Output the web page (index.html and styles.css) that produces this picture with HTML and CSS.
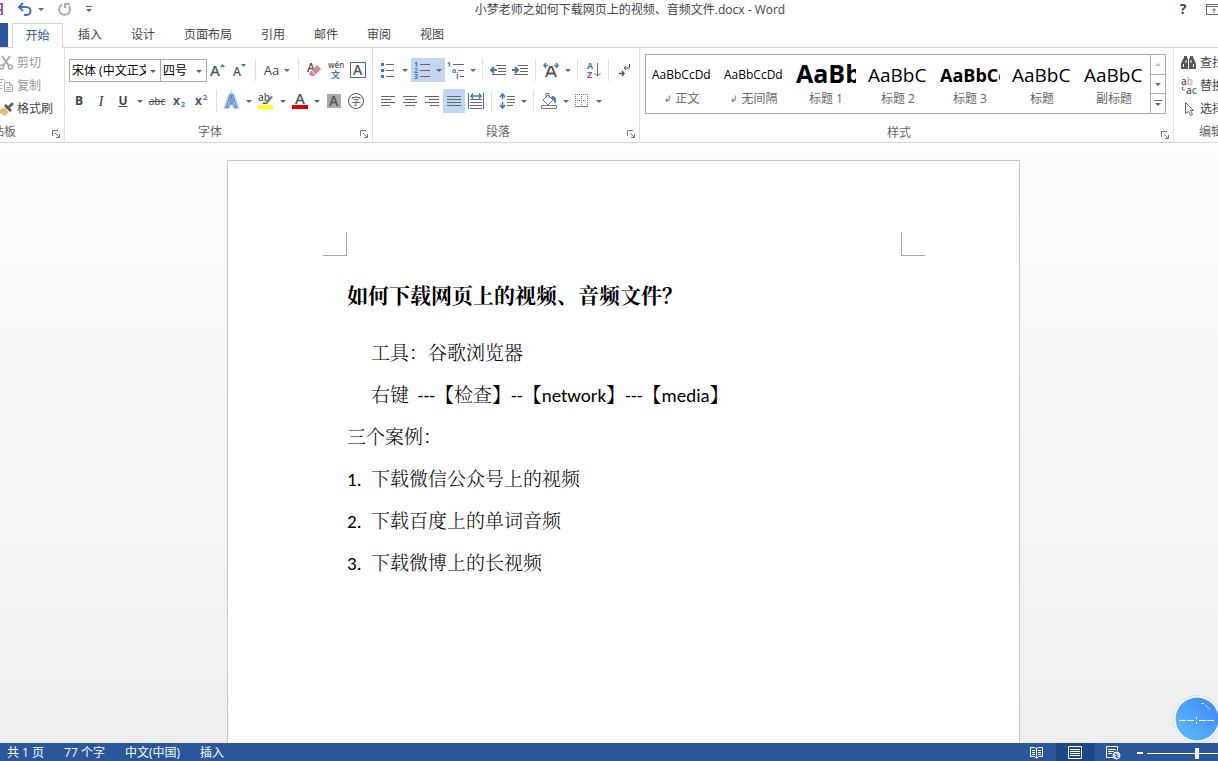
FILE: index.html
```html
<!DOCTYPE html>
<html lang="zh-CN">
<head>
<meta charset="utf-8">
<title>小梦老师之如何下载网页上的视频、音频文件.docx - Word</title>
<link rel="stylesheet" href="styles.css">
</head>
<body>
<header class="titlebar">
  <div class="quick">
    <button class="q save" aria-label="保存"><svg width="4" height="14"><path d="M0 1h3v12H0z" fill="#8e5ba6"/><path d="M0 3h1v4H0zM0 9h1v3H0z" fill="#fff"/></svg></button>
    <button class="q undo" aria-label="撤消"><svg width="16" height="15" fill="none" stroke="#3f76b8" stroke-width="2"><path d="M2 5h7c6 0 6 8 0 8H7"/><path d="M6 1L2 5l4 4"/></svg></button>
    <button class="q more" aria-label="撤消选项"><i class="caret"></i></button>
    <button class="q redo" aria-label="重复"><svg width="16" height="15" fill="none" stroke="#b0b0b0" stroke-width="2"><path d="M5 2.500A5.500 5.500 0 1 0 12 4"/><path d="M8 6V2h5"/></svg></button>
    <button class="q" aria-label="自定义快速访问工具栏"><svg width="8" height="8"><path d="M1 1h6v1H1z" fill="#666"/><path d="M1 4h6L4 7z" fill="#666"/></svg></button>
  </div>
  <h1 class="doc-name">小梦老师之如何下载网页上的视频、音频文件.docx - Word</h1>
  <div class="window-tools">
    <button class="q help" aria-label="帮助">?</button>
    <button class="q" aria-label="功能区显示选项"><svg width="16" height="11" fill="none" stroke="#666"><path d="M.5.500h15v10H.500zM.500 2.500h15M8 9V5M6 6.500l2-2 2 2"/></svg></button>
  </div>
</header>

<nav class="tabs" aria-label="功能区">
  <button class="file-tab" aria-label="文件"></button>
  <button class="tab active">开始</button>
  <button class="tab">插入</button>
  <button class="tab">设计</button>
  <button class="tab">页面布局</button>
  <button class="tab">引用</button>
  <button class="tab">邮件</button>
  <button class="tab">审阅</button>
  <button class="tab">视图</button>
</nav>

<section class="ribbon">
  <div class="group clipboard">
    <div class="stack">
      <button class="cmd off"><svg width="14" height="16" fill="none" stroke="#aaa" stroke-width="2"><path d="M2 1l7 10M10 1L3 11"/><circle cx="1.500" cy="12" r="2" stroke-width="1.500"/><circle cx="10.500" cy="12" r="2" stroke-width="1.500"/></svg>剪切</button>
      <button class="cmd off"><svg width="14" height="16" fill="none" stroke="#aaa"><path d="M0 1.500h4l2 2M0 4.500h2M0 7.500h2M0 10.500h2"/><path d="M4.500 4.500h5l3 3v6h-8zM9.500 4.500v3h3M6 9.500h5M6 11.500h5"/></svg>复制</button>
      <button class="cmd"><svg width="14" height="16"><path d="M0 9l4-3 5 5-4 4-5-3z" fill="#e5bc79"/><path d="M4 5l2-2 6 6-2 2z" fill="#555"/><path d="M8 5l4-4 2 2-4 4z" fill="#666"/></svg>格式刷</button>
    </div>
    <div class="caption"><span>剪贴板</span><button class="launch" aria-label="剪贴板选项"><svg width="8" height="8" fill="none" stroke="#777"><path d="M.500 6V.500H6M3 3l4 4M7.500 4v3.500H4"/></svg></button></div>
  </div>

  <div class="group font">
    <div class="row">
      <label class="pick family"><select aria-label="字体"><option>宋体 (中文正文)</option></select></label>
      <label class="pick size"><select aria-label="字号"><option>四号</option></select></label>
      <button class="b" aria-label="增大字号"><svg width="16" height="16"><text x="0" y="14" font-size="15" class="ico">A</text><path d="M10 5l2.500-3L15 5z" fill="#3f76b8"/></svg></button>
      <button class="b" aria-label="减小字号"><svg width="16" height="16"><text x="1" y="14" font-size="12" class="ico">A</text><path d="M9 2h5l-2.500 3z" fill="#3f76b8"/></svg></button>
      <i class="sep"></i>
      <button class="b wide" aria-label="更改大小写"><span class="case">Aa</span><i class="caret"></i></button>
      <i class="sep"></i>
      <button class="b" aria-label="清除格式"><svg width="16" height="16"><text x="1" y="10" font-size="12" class="ico">A</text><path d="M4 10l7-7 4 4-7 7H5l-2-2z" fill="#e2838f"/><path d="M5 8l5 5" stroke="#fff"/></svg></button>
      <button class="b" aria-label="拼音指南"><svg width="18" height="18"><text x="1" y="7" font-size="8" class="ico">wén</text><text x="4" y="17" font-size="9" class="blue cjk">文</text></svg></button>
      <button class="b" aria-label="字符边框"><svg width="16" height="16"><path d="M.500.500h15v15H.500z" fill="none" stroke="#3f6c9b"/><text x="3" y="13" font-size="14" class="ico">A</text></svg></button>
    </div>
    <div class="row">
      <button class="b strong" aria-label="加粗">B</button>
      <button class="b slant" aria-label="倾斜">I</button>
      <button class="b under" aria-label="下划线">U</button><button class="drop" aria-label="下划线选项"><i class="caret"></i></button>
      <button class="b strike" aria-label="删除线">abc</button>
      <button class="b" aria-label="下标"><svg width="14" height="16"><text x="1" y="12" font-size="12" class="ico bold">x</text><text x="9" y="14" font-size="7" class="blue">2</text></svg></button>
      <button class="b" aria-label="上标"><svg width="14" height="16"><text x="1" y="12" font-size="12" class="ico bold">x</text><text x="9" y="7" font-size="7" class="blue">2</text></svg></button>
      <i class="sep"></i>
      <button class="b" aria-label="文本效果"><svg width="16" height="16"><text x="2" y="14" font-size="16" class="halo">A</text><text x="2" y="14" font-size="16" class="glow">A</text></svg></button><button class="drop" aria-label="文本效果选项"><i class="caret"></i></button>
      <button class="b" aria-label="突出显示"><svg width="18" height="18"><text x="1" y="9" font-size="10" class="ico">ab</text><path d="M7 12l7-8 2 1-6 7z" fill="#777"/><path d="M5 12l2-2 2 2z" fill="#555"/><path d="M1 13h15v4H1z" fill="#ff0"/></svg></button><button class="drop" aria-label="突出显示颜色"><i class="caret"></i></button>
      <button class="b" aria-label="字体颜色"><svg width="18" height="18"><text x="4" y="12" font-size="15" class="ico">A</text><path d="M1 13h16v4H1z" fill="#e00000"/></svg></button><button class="drop" aria-label="字体颜色选项"><i class="caret"></i></button>
      <button class="b" aria-label="字符底纹"><svg width="14" height="14"><path d="M0 0h14v14H0z" fill="#aaa"/><text x="2" y="12" font-size="14" class="ico">A</text></svg></button>
      <button class="b" aria-label="带圈字符"><svg width="16" height="16"><circle cx="8" cy="8" r="7.500" fill="none" stroke="#555"/><text x="3" y="12" font-size="10" class="ico cjk">字</text></svg></button>
    </div>
    <div class="caption"><span>字体</span><button class="launch" aria-label="字体选项"><svg width="8" height="8" fill="none" stroke="#777"><path d="M.500 6V.500H6M3 3l4 4M7.500 4v3.500H4"/></svg></button></div>
  </div>

  <div class="group para">
    <div class="row">
      <button class="b" aria-label="项目符号"><svg width="16" height="16"><path d="M1 1h3v3H1zM1 7h3v3H1zM1 13h3v3H1z" fill="#3f76b8"/><path d="M6 2.500h8M6 8.500h8M6 14.500h8" stroke="#666"/></svg></button><button class="drop" aria-label="项目符号库"><i class="caret"></i></button>
      <button class="b on" aria-label="编号"><svg width="18" height="18"><text x="1" y="6" font-size="7" class="blue">1</text><text x="1" y="12" font-size="7" class="blue">2</text><text x="1" y="18" font-size="7" class="blue">3</text><path d="M7 3.500h10M7 9.500h10M7 15.500h10" stroke="#666"/></svg></button><button class="drop on" aria-label="编号库"><i class="caret"></i></button>
      <button class="b" aria-label="多级列表"><svg width="18" height="18"><text x="0" y="6" font-size="7" class="blue">1</text><text x="5" y="12" font-size="7" class="blue">a</text><text x="9" y="18" font-size="8" class="blue">i</text><path d="M6 3.500h11M11 9.500h6M13 15.500h4" stroke="#666"/></svg></button><button class="drop near" aria-label="多级列表库"><i class="caret"></i></button>
      <i class="sep"></i>
      <button class="b" aria-label="减少缩进量"><svg width="16" height="16" fill="none" stroke="#666"><path d="M6 3.500h10M8 6.500h8M8 9.500h8M2 12.500h14"/><path d="M1 8h6M4 5L1 8l3 3" stroke="#3f76b8" stroke-width="2"/></svg></button>
      <button class="b" aria-label="增加缩进量"><svg width="16" height="16" fill="none" stroke="#666"><path d="M6 3.500h10M8 6.500h8M8 9.500h8M2 12.500h14"/><path d="M0 8h6M3 5l3 3-3 3" stroke="#3f76b8" stroke-width="2"/></svg></button>
      <i class="sep"></i>
      <button class="b" aria-label="中文版式"><svg width="16" height="16"><path d="M3 15L7 5h2l4 10M5 11.500h6" fill="none" stroke="#555" stroke-width="2"/><path d="M3 1L1 3.500 3 6M1 3.500h4M13 1l2 2.500L13 6M15 3.500h-4" fill="none" stroke="#3f76b8" stroke-width="1.500"/></svg></button><button class="drop near" aria-label="中文版式选项"><i class="caret"></i></button>
      <i class="sep"></i>
      <button class="b" aria-label="排序"><svg width="16" height="18"><text x="2" y="8" font-size="9" class="blue">A</text><text x="2" y="17" font-size="9" class="violet">Z</text><path d="M12.500 2v13M9.500 12l3 3 3-3" fill="none" stroke="#666"/></svg></button>
      <i class="sep"></i>
      <button class="b" aria-label="显示编辑标记"><svg width="14" height="16" fill="none" stroke="#555"><path d="M12.500 2v4H7M9 4L7 6l2 2"/><path d="M2 11.500h5M5 9l2 2.500L5 14" stroke-width="1.500"/></svg></button>
    </div>
    <div class="row">
      <button class="b" aria-label="左对齐"><svg width="14" height="12" stroke="#666"><path d="M0 1.500h14M0 4.500h10M0 7.500h14M0 10.500h9"/></svg></button>
      <button class="b" aria-label="居中"><svg width="14" height="12" stroke="#666"><path d="M0 1.500h14M2 4.500h10M0 7.500h14M2 10.500h10"/></svg></button>
      <button class="b" aria-label="右对齐"><svg width="14" height="12" stroke="#666"><path d="M0 1.500h14M4 4.500h10M0 7.500h14M5 10.500h9"/></svg></button>
      <button class="b on" aria-label="两端对齐"><svg width="14" height="12" stroke="#666"><path d="M0 1.500h14M0 4.500h14M0 7.500h14M0 10.500h14"/></svg></button>
      <button class="b" aria-label="分散对齐"><svg width="16" height="16" fill="none" stroke="#666"><path d="M2 6.500h12M2 9.500h12M2 12.500h12M2 15.500h12"/><path d="M.500 0v16M15.500 0v16" stroke="#3f76b8"/><path d="M3 3h10M5 .500L3 3l2 2.500M11 .500L13 3l-2 2.500" stroke="#3f76b8" stroke-width="1.500"/></svg></button>
      <i class="sep"></i>
      <button class="b" aria-label="行距"><svg width="16" height="16" fill="none" stroke="#666"><path d="M8 3.500h8M8 6.500h8M8 9.500h8M8 12.500h6"/><path d="M3.500 1v5M1 4l2.500-3L6 4M3.500 9v6M1 12l2.500 3L6 12" stroke="#3f76b8" stroke-width="1.500"/></svg></button><button class="drop near" aria-label="行距选项"><i class="caret"></i></button>
      <i class="sep"></i>
      <button class="b" aria-label="底纹"><svg width="18" height="18" fill="none" stroke="#777"><path d="M3 8l5-5 5 5-5 5zM6 6V1.500h3V6"/><path d="M12 4c4 0 5 4 3 8-1-3-1-5-4-6z" fill="#3f76b8" stroke="none"/><path d="M1.500 13.500h15v3h-15z"/></svg></button><button class="drop near" aria-label="底纹颜色"><i class="caret"></i></button>
      <button class="b" aria-label="边框"><svg width="14" height="14" fill="none" stroke="#777"><path d="M0 .500h13M0 6.500h13M.500 0v13M6.500 0v13M12.500 0v13" stroke-dasharray="1 1"/><path d="M0 12.500h13"/></svg></button><button class="drop" aria-label="边框选项"><i class="caret"></i></button>
    </div>
    <div class="caption"><span>段落</span><button class="launch" aria-label="段落选项"><svg width="8" height="8" fill="none" stroke="#777"><path d="M.500 6V.500H6M3 3l4 4M7.500 4v3.500H4"/></svg></button></div>
  </div>

  <div class="group styles">
    <div class="gallery">
      <button class="style"><span class="sample small">AaBbCcDd</span><span class="style-name"><i class="mark">↲</i>正文</span></button>
      <button class="style"><span class="sample small">AaBbCcDd</span><span class="style-name"><i class="mark">↲</i>无间隔</span></button>
      <button class="style"><span class="sample huge">AaBb</span><span class="style-name">标题 1</span></button>
      <button class="style"><span class="sample">AaBbC</span><span class="style-name">标题 2</span></button>
      <button class="style"><span class="sample heavy">AaBbCc</span><span class="style-name">标题 3</span></button>
      <button class="style"><span class="sample">AaBbC</span><span class="style-name">标题</span></button>
      <button class="style"><span class="sample">AaBbC</span><span class="style-name">副标题</span></button>
      <div class="scroller">
        <button aria-label="上一行"><svg width="6" height="4"><path d="M0 4l3-3 3 3z" fill="#bbb"/></svg></button>
        <button aria-label="下一行"><i class="caret"></i></button>
        <button aria-label="其他样式"><svg width="8" height="7"><path d="M0 0h8v1H0zM1 3h6L4 6z" fill="#666"/></svg></button>
      </div>
    </div>
    <div class="caption"><span>样式</span><button class="launch" aria-label="样式选项"><svg width="8" height="8" fill="none" stroke="#777"><path d="M.500 6V.500H6M3 3l4 4M7.500 4v3.500H4"/></svg></button></div>
  </div>

  <div class="group editing">
    <div class="stack">
      <button class="cmd"><svg width="16" height="16" fill="#555"><path d="M3 1h3v2l1 1v10H0V9l2-5 1-1zM9 1h3v2l1 1 2 5v5H8V4l1-1z"/><path d="M2.500 9v3M5 5v3M10 5v3M12.500 9v3" stroke="#fff"/></svg>查找</button>
      <button class="cmd"><svg width="16" height="16"><text x="0" y="7" font-size="10" class="ico">a<tspan fill="#c9a9a0">b</tspan></text><text x="5" y="16" font-size="10" class="ico">a<tspan fill="#3f76b8">c</tspan></text><path d="M1.500 9v3H4" fill="none" stroke="#3f76b8"/></svg>替换</button>
      <button class="cmd"><svg width="16" height="16" fill="#fff" stroke="#666"><path d="M4.500 1.500v11l3-2 2 4 2-1-2-4h3z"/></svg>选择</button>
    </div>
    <div class="caption"><span>编辑</span></div>
  </div>
</section>

<main class="workspace">
  <article class="page">
    <div class="margins"><i class="corner left"></i><i class="corner right"></i></div>
    <div class="text">
      <h2>如何下载网页上的视频、音频文件？</h2>
      <p class="indent">工具：谷歌浏览器</p>
      <p class="indent">右键&nbsp; ---【检查】--【network】---【media】</p>
      <p>三个案例：</p>
      <ol>
        <li><span class="num">1.</span>下载微信公众号上的视频</li>
        <li><span class="num">2.</span>下载百度上的单词音频</li>
        <li><span class="num">3.</span>下载微博上的长视频</li>
      </ol>
    </div>
  </article>
  <div class="timer"><svg width="48" height="48"><defs><linearGradient id="orb" x1="0" y1="1" x2="1" y2="0"><stop offset="0" stop-color="#5cbcff"/><stop offset="1" stop-color="#3f86f8"/></linearGradient></defs><circle cx="24" cy="24" r="23.500" fill="#fff" stroke="#ddd"/><circle cx="24" cy="24" r="21.500" fill="url(#orb)"/><path d="M6 25.500h7M14 25.500h7M26 25.500h7M34 25.500h7" stroke="#fff"/><path d="M23 22h1v2h-1zM23 27h1v2h-1z" fill="#fff"/><path d="M28 8.500h3M32 10l5 4" stroke="#c5e3ff" fill="none"/></svg></div>
</main>

<footer class="status">
  <span class="pages">共 1 页</span><span class="words">77 个字</span><span class="lang">中文(中国)</span><span>插入</span>
  <div class="views">
    <button aria-label="阅读视图"><svg width="14" height="14" fill="none" stroke="#fff"><path d="M.500 1.500h4l2 1 2-1h4v9h-4l-2 2-2-2h-4zM6.500 2v10M2 4.500h3M2 6.500h3M2 8.500h3M8 4.500h3M8 6.500h3M8 8.500h3"/></svg></button>
    <button class="current" aria-label="页面视图"><svg width="14" height="14" fill="none" stroke="#fff"><path d="M.500.500h13v12H.500zM2 3.500h10M2 5.500h10M2 7.500h10M2 9.500h10"/></svg></button>
    <button aria-label="Web 版式视图"><svg width="15" height="14" fill="none" stroke="#fff"><path d="M7 11.500H.500v-11h11V5M2 3.500h8M2 5.500h6M2 7.500h4"/><circle cx="10.500" cy="9.500" r="3.500" fill="#b9cbe6"/><path d="M9 8l2 1-1 2 3 1" stroke="#2b579a"/></svg></button>
    <button class="zoom-out" aria-label="缩小"><svg width="6" height="2"><path d="M0 0h6v2H0z" fill="#fff"/></svg></button>
    <div class="zoom"><input type="range" min="0" max="100" value="50" aria-label="显示比例"></div>
  </div>
</footer>
</body>
</html>
```

FILE: styles.css
```css
* { box-sizing: border-box; }
body {
  margin: 0;
  height: 100vh;
  display: flex;
  flex-direction: column;
  overflow: hidden;
  background: #fff;
  color: #444;
  font: 12px/18px "Open Sans", "Noto Sans CJK SC", sans-serif;
}
button {
  margin: 0;
  padding: 0;
  border: 0;
  background: none;
  color: inherit;
  font: inherit;
  display: flex;
  align-items: center;
  justify-content: center;
  flex: none;
}
i { font-style: normal; }
svg { flex: none; display: block; overflow: visible; }
.caret {
  border: 3px solid transparent;
  border-top-color: #666;
  border-bottom: 0;
}

.titlebar { display: flex; height: 23px; flex: none; }
.quick { display: flex; width: 100px; height: 18px; align-items: center; }
.save { margin-right: 13px; }
.more { width: 15px; margin-right: 9px; }
.redo { margin-right: 12px; }
.doc-name {
  flex: 1;
  margin: 0;
  font-size: 12px;
  line-height: 20px;
  font-weight: 400;
  text-align: center;
  white-space: nowrap;
}
.window-tools { display: flex; width: 58px; height: 18px; padding-left: 19px; gap: 19px; overflow: hidden; }
.help { font-weight: 700; font-size: 14px; width: 8px; }

.tabs {
  display: flex;
  align-items: stretch;
  gap: 29px;
  height: 25px;
  flex: none;
  border-bottom: 1px solid #d5d5d5;
}
.file-tab { width: 8px; background: #2b579a; margin-right: -25px; }
.tab.active {
  width: 51px;
  margin: 0 -14px -1px 0;
  border: 1px solid #d5d5d5;
  border-bottom: 0;
  background: #fff;
  color: #2b579a;
}

.ribbon {
  display: flex;
  flex: none;
  height: 95px;
  border-bottom: 1px solid #d5d5d5;
}
.group {
  display: flex;
  flex-direction: column;
  flex: none;
  position: relative;
  padding: 10px 0 0 4px;
}
.group:not(.editing) { border-right: 1px solid #e1e1e1; }
.clipboard { width: 65px; padding: 3px 0 0; }
.font { width: 308px; padding-left: 3px; }
.para { width: 267px; }
.styles { flex: 1; min-width: 534px; padding: 6px 7px 0 5px; }
.editing { width: 44px; padding: 3px 0 0 7px; }
.stack { display: flex; flex-direction: column; }
.cmd { height: 23px; gap: 3px; justify-content: flex-start; white-space: nowrap; }
.off { color: #999; }
.row { display: flex; align-items: center; height: 24px; margin-bottom: 7px; }
.b { width: 22px; height: 24px; }
.wide { width: 34px; gap: 5px; }
.drop { width: 12px; height: 24px; }
.near { width: 11px; }
.on { background: #c2d5f2; }
.sep { width: 1px; height: 22px; margin: 0 4px; background: #e1e1e1; flex: none; }
.case { font-size: 13px; }
.strong { font-weight: 700; }
.slant { font-style: italic; font-family: "Liberation Serif", serif; font-size: 15px; }
.under { font-weight: 700; text-decoration: underline; }
.strike { text-decoration: line-through; font-size: 10px; }
.ico { fill: #555; font-family: "Open Sans", sans-serif; font-weight: 600; }
.blue { fill: #3f76b8; font-weight: 700; }
.violet { fill: #9b4f96; font-weight: 700; }
.cjk { font-family: "Noto Sans CJK SC", sans-serif; font-weight: 400; }
.blue.cjk { font-weight: 700; }
.bold { font-weight: 700; }
.halo { fill: #cfe0f5; stroke: #b9d2f0; stroke-width: 4; font-weight: 600; }
.glow { fill: #fff; stroke: #3f76b8; font-weight: 600; }

.pick { position: relative; height: 23px; border: 1px solid #ababab; background: #fff; }
.family { width: 92px; margin-left: 1px; }
.size { width: 47px; margin-left: -1px; }
.pick select {
  appearance: none;
  width: 100%;
  height: 21px;
  padding: 0 14px 0 2px;
  border: 0;
  background: none;
  color: #000;
  font: 12px/21px "Open Sans", "Noto Sans CJK SC", sans-serif;
}
.pick::after {
  content: "";
  position: absolute;
  right: 4px;
  top: 10px;
  border: 3px solid transparent;
  border-top-color: #666;
  border-bottom: 0;
}

.caption { display: flex; align-items: center; height: 18px; margin-top: 3px; color: #666; }
.styles .caption { margin-top: 10px; }
.caption span { flex: 1; padding-right: 4px; text-align: center; }
.clipboard .caption { margin-left: -20px; }
.clipboard .caption span { text-align: left; }
.editing .caption { padding-left: 18px; }
.editing .caption span { text-align: left; white-space: nowrap; }
.launch { width: 16px; height: 16px; padding-top: 4px; }
.styles .launch { margin-right: -7px; }

.gallery {
  display: flex;
  height: 60px;
  border: 1px solid #ababab;
}
.style { width: 72px; flex-direction: column; justify-content: flex-start; }
.sample {
  width: 60px;
  height: 35px;
  overflow: hidden;
  color: #000;
  font-size: 19px;
  line-height: 41px;
  text-align: left;
  white-space: nowrap;
}
.small { font-size: 12px; line-height: 39px; }
.huge { font-size: 25px; line-height: 36px; font-weight: 700; }
.heavy { font-size: 18px; font-weight: 700; }
.style-name { color: #666; display: flex; gap: 3px; }
.mark { font-size: 9px; }
.scroller {
  display: flex;
  flex-direction: column;
  width: 15px;
  margin-left: auto;
  border-left: 1px solid #ababab;
}
.scroller button { flex: 1; }
.scroller button + button { border-top: 1px solid #ababab; }

.workspace {
  flex: 1;
  min-height: 0;
  display: flex;
  justify-content: center;
  position: relative;
  overflow: hidden;
  padding: 17px 0 0 29px;
  background: linear-gradient(#fdfdfd, #eee);
}
.page {
  width: 793px;
  flex: none;
  padding-top: 71px;
  border: 1px solid #c6c6c6;
  border-bottom: 0;
  background: #fff;
}
.margins { display: flex; justify-content: space-between; padding: 0 94px 0 95px; }
.corner { width: 24px; height: 24px; border-bottom: 1px solid #aaa; }
.left { border-right: 1px solid #aaa; }
.right { border-left: 1px solid #aaa; }
.text {
  padding: 19px 120px 0 119px;
  color: #000;
  font: 19px/42px Carlito, Lato, "Noto Serif CJK SC", "Noto Sans CJK SC", serif;
}
.text h2 { margin: 0 0 16px; font-size: 21px; line-height: 42px; font-weight: 700; }
.text p, .text ol { margin: 0; padding: 0; list-style: none; font-weight: 300; }
.text .indent { padding-left: 24px; }
.text li { display: flex; }
.num { width: 24px; }

.timer { position: absolute; right: -3px; bottom: 0; }

.status {
  display: flex;
  align-items: center;
  flex: none;
  height: 18px;
  padding-left: 7px;
  gap: 20px;
  overflow: hidden;
  background: #2b579a;
  color: #fff;
  line-height: 20px;
  white-space: nowrap;
}
.status span { padding-top: 2px; }
.views { display: flex; align-items: center; height: 18px; margin-left: auto; }
.views button { width: 38px; height: 18px; padding-top: 2px; }
.views .current { background: #1e4785; }
.views .zoom-out { width: 15px; }
.zoom { width: 71px; height: 18px; padding-top: 1px; overflow: hidden; }
.zoom input {
  appearance: none;
  display: block;
  width: 100px;
  height: 18px;
  margin: 0;
  background: linear-gradient(#fff, #fff) center / 100% 1px no-repeat;
}
.zoom input::-webkit-slider-thumb { appearance: none; width: 4px; height: 11px; background: #fff; }
```
